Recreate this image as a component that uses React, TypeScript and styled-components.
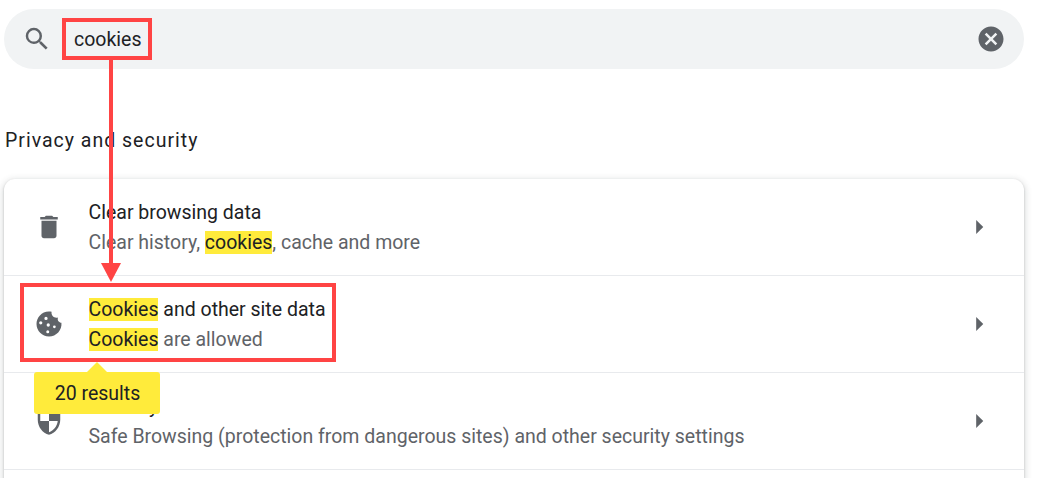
import styled, { createGlobalStyle } from 'styled-components';

const GlobalStyle = createGlobalStyle`
  html, body {
    margin: 0;
    height: 100%;
    overflow: hidden;
    background-color: #fff;
  }

  body {
    font-family: Roboto, "Liberation Sans", sans-serif;
    color: #202124;
  }
`;

const Page = styled.div`
  position: relative;
  width: 1039px;
  height: 478px;
  overflow: hidden;
  padding: 9px 15px 0 4px;
  box-sizing: border-box;
`;

const SearchBar = styled.div`
  display: flex;
  align-items: center;
  height: 60px;
  padding: 0 18px;
  box-sizing: border-box;
  border-radius: 30px;
  background-color: #f1f3f4;
`;

const SearchGlass = styled.svg`
  width: 30px;
  height: 30px;
  fill: #5f6368;
  flex-shrink: 0;
`;

const SearchTerm = styled.span`
  position: relative;
  margin-left: 22px;
  padding-top: 2px;
  flex: 1;
  font-size: 19.5px;
  line-height: 58px;
`;

const ClearIcon = styled.svg`
  width: 30px;
  height: 30px;
  fill: #5f6368;
  flex-shrink: 0;
`;

const Heading = styled.h2`
  margin: 57px 0 -1px 1px;
  font-size: 19.5px;
  font-weight: 400;
  line-height: 30px;
  letter-spacing: 1px;
`;

const Card = styled.div`
  margin-top: 24px;
  border-radius: 11px;
  background-color: #fff;
  box-shadow: 0 1px 2px rgba(60, 64, 67, 0.3), 0 2px 6px 2px rgba(60, 64, 67, 0.15);
`;

const Row = styled.div`
  display: flex;
  align-items: center;
  height: 97px;
  padding: 0 28px 0 30px;
  box-sizing: border-box;

  &:first-child {
    height: 96px;
  }

  & + & {
    border-top: 1px solid #e8eaed;
  }
`;

const RowIcon = styled.svg`
  width: 30px;
  height: 30px;
  fill: #5f6368;
  flex-shrink: 0;
`;

const RowText = styled.div`
  flex: 1;
  margin-left: 24.5px;
  padding-top: 2px;
  font-size: 19.5px;
  line-height: 30px;
`;

const Title = styled.div`
  color: #202124;
`;

const Subtitle = styled.div`
  color: #5f6368;
`;

const Mark = styled.span`
  background-color: #ffeb3b;
  color: #202124;
`;

const Caret = styled.svg`
  width: 34px;
  height: 34px;
  fill: #5f6368;
  flex-shrink: 0;
`;

// annotations drawn over the screenshot
const RedBox = styled.div<{ $x: number; $y: number; $w: number; $h: number }>`
  position: absolute;
  left: ${(p) => p.$x}px;
  top: ${(p) => p.$y}px;
  width: ${(p) => p.$w}px;
  height: ${(p) => p.$h}px;
  box-sizing: border-box;
  border: 4px solid #ff4444;
`;

const ArrowOverlay = styled.svg`
  position: absolute;
  left: 96px;
  top: 60px;
  width: 30px;
  height: 224px;
  fill: #ff4444;
`;

const Tooltip = styled.div`
  position: absolute;
  left: 34px;
  top: 372px;
  width: 126px;
  height: 42px;
  padding: 1px 0 0 1px;
  box-sizing: border-box;
  border-radius: 3px;
  background-color: #ffeb3b;
  font-size: 19.5px;
  line-height: 41px;
  text-align: center;
  color: #202124;

  &::before {
    content: '';
    position: absolute;
    left: 53px;
    top: -10px;
    border-left: 10px solid transparent;
    border-right: 10px solid transparent;
    border-bottom: 10px solid #ffeb3b;
  }
`;

function CaretRight() {
  return (
    <Caret viewBox="0 0 24 24">
      <path d="M10 17l5-5-5-5v10z" />
    </Caret>
  );
}

export default function App() {
  return (
    <Page>
      <GlobalStyle />
      <SearchBar>
        <SearchGlass viewBox="0 0 24 24">
          <path d="M15.5 14h-.79l-.28-.27A6.471 6.471 0 0 0 16 9.5 6.5 6.5 0 1 0 9.5 16c1.61 0 3.09-.59 4.23-1.57l.27.28v.79l5 4.99L20.49 19l-4.99-5zm-6 0C7.01 14 5 11.99 5 9.5S7.01 5 9.5 5 14 7.01 14 9.5 11.99 14 9.5 14z" />
        </SearchGlass>
        <SearchTerm>cookies</SearchTerm>
        <ClearIcon viewBox="0 0 24 24">
          <path d="M12 2C6.47 2 2 6.47 2 12s4.47 10 10 10 10-4.47 10-10S17.53 2 12 2zm5 13.59L15.59 17 12 13.41 8.41 17 7 15.59 10.59 12 7 8.41 8.41 7 12 10.59 15.59 7 17 8.41 13.41 12 17 15.59z" />
        </ClearIcon>
      </SearchBar>

      <Heading>Privacy and security</Heading>

      <Card>
        <Row>
          <RowIcon viewBox="0 0 24 24">
            <path d="M6 19c0 1.1.9 2 2 2h8c1.1 0 2-.9 2-2V7H6v12zM19 4h-3.5l-1-1h-5l-1 1H5v2h14V4z" />
          </RowIcon>
          <RowText>
            <Title>Clear browsing data</Title>
            <Subtitle>
              Clear history, <Mark>cookies</Mark>, cache and more
            </Subtitle>
          </RowText>
          <CaretRight />
        </Row>
        <Row>
          <RowIcon viewBox="0 0 24 24">
            <path
              fillRule="evenodd"
              d="M21.95 10.99c-1.79-.03-3.7-1.95-2.68-4.22-2.97 1-5.78-1.59-5.19-4.56C7.11.74 2 6.41 2 12c0 5.52 4.48 10 10 10 5.89 0 10.54-5.08 9.95-11.01zM4.1 11a1.3 1.3 0 1 0 2.6 0a1.3 1.3 0 1 0-2.6 0zM8.3 7.5a1.3 1.3 0 1 0 2.6 0a1.3 1.3 0 1 0-2.6 0zM10.1 12.8a1.3 1.3 0 1 0 2.6 0a1.3 1.3 0 1 0-2.6 0zM15.2 14.2a1.1 1.1 0 1 0 2.2 0a1.1 1.1 0 1 0-2.2 0zM9.8 18.1a1.2 1.2 0 1 0 2.4 0a1.2 1.2 0 1 0-2.4 0z"
            />
          </RowIcon>
          <RowText>
            <Title>
              <Mark>Cookies</Mark> and other site data
            </Title>
            <Subtitle>
              <Mark>Cookies</Mark> are allowed
            </Subtitle>
          </RowText>
          <CaretRight />
        </Row>
        <Row>
          <RowIcon viewBox="0 0 24 24">
            <path d="M12 1L3 5v6c0 5.55 3.84 10.74 9 12 5.16-1.26 9-6.45 9-12V5l-9-4zm0 10.99h7c-.53 4.12-3.28 7.79-7 8.94V12H5V6.3l7-3.11v8.8z" />
          </RowIcon>
          <RowText>
            <Title>Security</Title>
            <Subtitle>Safe Browsing (protection from dangerous sites) and other security settings</Subtitle>
          </RowText>
          <CaretRight />
        </Row>
        <Row />
      </Card>

      <RedBox $x={62} $y={18} $w={90} $h={42} />
      <RedBox $x={20} $y={283} $w={316} $h={79} />
      <ArrowOverlay viewBox="0 0 30 224">
        <rect x="13" y="0" width="4" height="204" />
        <path d="M5 203h20l-10 19z" />
      </ArrowOverlay>
      <Tooltip>20 results</Tooltip>
    </Page>
  );
}
